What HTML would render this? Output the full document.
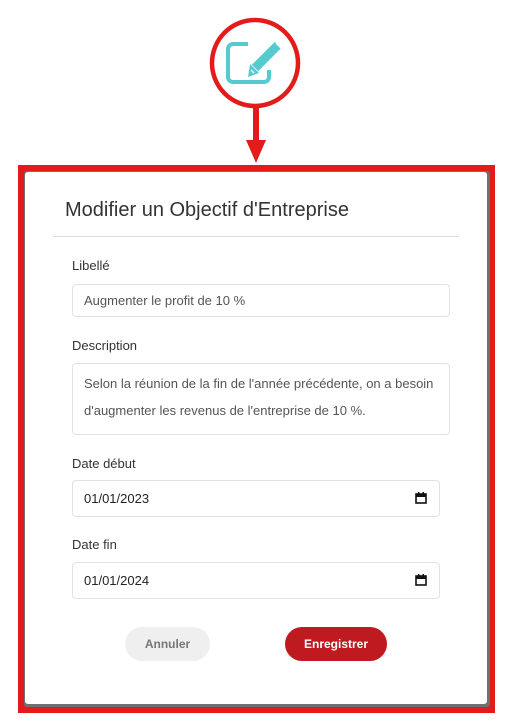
<!DOCTYPE html>
<html><head><meta charset="utf-8"><style>
*{box-sizing:border-box;margin:0;padding:0}
body{width:511px;height:728px;background:#fff;position:relative;overflow:hidden;font-family:"Liberation Sans",Arial,sans-serif;color:#333}
.a{position:absolute}
.frame{left:18px;top:165px;width:477px;height:548px;background:#e31b1b}
.gray{left:24px;top:171px;width:466px;height:536px;background:#707070;border-radius:3px}
.modal{left:25px;top:172px;width:462px;height:532px;background:#fff;border-radius:3px}
.lbl{font-size:13px;color:#333}
.inp{border:1px solid #e2e2e2;border-radius:4px;font-size:13px;color:#555;padding-left:11px;display:flex;align-items:center}
.btn{border-radius:17px;font-size:12px;font-weight:bold;display:flex;align-items:center;justify-content:center}
</style></head><body>
<svg class="a" style="left:0;top:0" width="511" height="170">
<circle cx="255" cy="63" r="43" fill="#fff" stroke="#e31b1b" stroke-width="4.5"/>
<path d="M248 44H233a5 5 0 0 0-5 5v28a5 5 0 0 0 5 5h31a5 5 0 0 0 5-5V70" fill="none" stroke="#55cbd0" stroke-width="4"/>
<path d="M255 68L278 45" stroke="#55cbd0" stroke-width="9"/>
<path d="M250 64l9 9-11 4z" fill="#55cbd0"/>
<path d="M276 43l6 6" stroke="#fff" stroke-width="1.5"/>
<path d="M251 70l3 3" stroke="#fff" stroke-width="1.5"/>
<rect x="253" y="108" width="6" height="34" fill="#e31b1b"/>
<path d="M246 140h20l-10 23z" fill="#e31b1b"/>
</svg>
<div class="a frame"></div>
<div class="a gray"></div>
<div class="a modal"></div>
<div class="a" style="left:65px;top:199px;font-size:20px;color:#333">Modifier un Objectif d'Entreprise</div>
<div class="a" style="left:53px;top:236px;width:406px;height:1px;background:#ddd"></div>
<div class="a lbl" style="left:72px;top:258px">Libellé</div>
<div class="a inp" style="left:72px;top:284px;width:378px;height:33px">Augmenter le profit de 10 %</div>
<div class="a lbl" style="left:72px;top:338px">Description</div>
<div class="a inp" style="left:72px;top:363px;width:378px;height:72px;display:block;padding-top:6px;line-height:27px">Selon la réunion de la fin de l'année précédente, on a besoin d'augmenter les revenus de l'entreprise de 10 %.</div>
<div class="a lbl" style="left:72px;top:456px">Date début</div>
<div class="a inp" style="left:72px;top:480px;width:368px;height:37px;color:#222">01/01/2023</div>
<div class="a lbl" style="left:72px;top:537px">Date fin</div>
<div class="a inp" style="left:72px;top:562px;width:368px;height:37px;color:#222">01/01/2024</div>
<svg class="a" style="left:415px;top:492px" width="12" height="12"><rect x="1" y="2" width="10" height="9" fill="none" stroke="#111" stroke-width="1.6"/><rect x="1" y="2" width="10" height="3" fill="#111"/><rect x="3" y="0" width="1.5" height="3" fill="#111"/><rect x="7.5" y="0" width="1.5" height="3" fill="#111"/></svg>
<svg class="a" style="left:415px;top:574px" width="12" height="12"><rect x="1" y="2" width="10" height="9" fill="none" stroke="#111" stroke-width="1.6"/><rect x="1" y="2" width="10" height="3" fill="#111"/><rect x="3" y="0" width="1.5" height="3" fill="#111"/><rect x="7.5" y="0" width="1.5" height="3" fill="#111"/></svg>
<div class="a btn" style="left:125px;top:627px;width:85px;height:34px;background:#efefef;color:#777">Annuler</div>
<div class="a btn" style="left:285px;top:627px;width:102px;height:34px;background:#be1a20;color:#fff">Enregistrer</div>
</body></html>
